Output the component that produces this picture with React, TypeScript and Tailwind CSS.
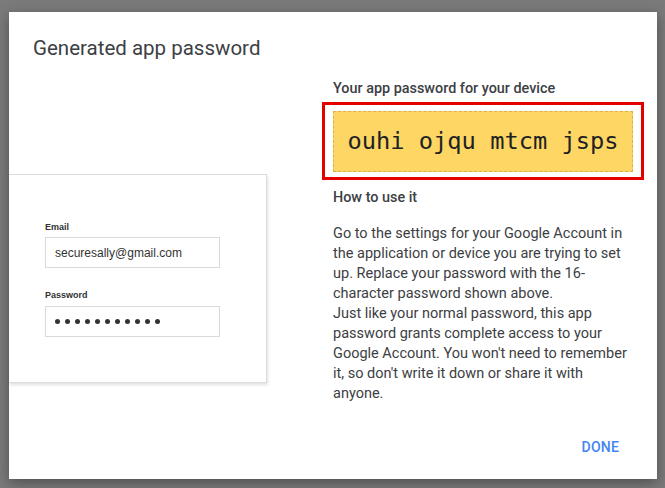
const PARAGRAPH_1 =
  "Go to the settings for your Google Account in the application or device you are trying to set up. Replace your password with the 16-character password shown above.";
const PARAGRAPH_2 =
  "Just like your normal password, this app password grants complete access to your Google Account. You won't need to remember it, so don't write it down or share it with anyone.";

// Illustration of a sign-in form, clipped at the dialog's left edge.
function SignInCard() {
  return (
    <div className="mt-[112px] w-[258px] border border-l-0 border-[#dcdcdc] bg-white pt-[46px] pb-[45px] pl-[36px] shadow-[1px_2px_3px_rgba(0,0,0,0.12)] font-['Liberation_Sans',Arial,sans-serif] text-[#333]">
      <div className="text-[9px] leading-[12px] font-bold">Email</div>
      <div className="mt-[4px] flex h-[31px] w-[175px] items-center border border-[#dadada] px-[9px] text-[12px]">
        securesally@gmail.com
      </div>
      <div className="mt-[21px] text-[9px] leading-[12px] font-bold">Password</div>
      <div className="mt-[5px] flex h-[31px] w-[175px] items-center gap-[5px] border border-[#dadada] px-[9px]">
        {Array.from({ length: 11 }).map((_, i) => (
          <span key={i} className="h-[5px] w-[5px] rounded-full bg-[#333]" />
        ))}
      </div>
    </div>
  );
}

export default function App() {
  return (
    <div className="h-[488px] w-[665px] overflow-hidden bg-[#7a7a7a] pt-[12px] pl-[9px] font-['Roboto',sans-serif]">
      <div className="flex h-[467px] w-[648px] flex-col bg-white shadow-[0_4px_12px_rgba(0,0,0,0.35)]">
        <h1 className="px-6 pt-[22px] text-[20.5px] leading-[28px] text-[#3c4043]">Generated app password</h1>

        <div className="flex flex-1">
          <div className="w-[324px] shrink-0">
            <SignInCard />
          </div>

          <div className="w-[302px] pt-[17px] text-[#3c4043]">
            <div className="text-[14.4px] leading-[20px] font-medium">Your app password for your device</div>
            <div className="mt-[3px] mr-[-9px] ml-[-11px] border-[3px] border-[#e50000] px-[8px] pt-[6px] pb-[5px]">
              <div className="flex h-[61px] items-center justify-center border border-dashed border-[#d9b24a] bg-[#fdd663] font-['DejaVu_Sans_Mono',monospace] text-[23.7px] text-[#202124]">
                ouhi ojqu mtcm jsps
              </div>
            </div>
            <div className="mt-[8px] text-[14.4px] leading-[20px] font-medium">How to use it</div>
            <div className="mt-[16px] text-[14.5px] leading-[20px]">
              <p>{PARAGRAPH_1}</p>
              <p>{PARAGRAPH_2}</p>
            </div>
          </div>
        </div>

        <div className="flex justify-end pr-[32px] pb-[14px]">
          <button className="h-9 px-[6px] text-[14px] font-medium tracking-[0.2px] text-[#4285f4]">DONE</button>
        </div>
      </div>
    </div>
  );
}
